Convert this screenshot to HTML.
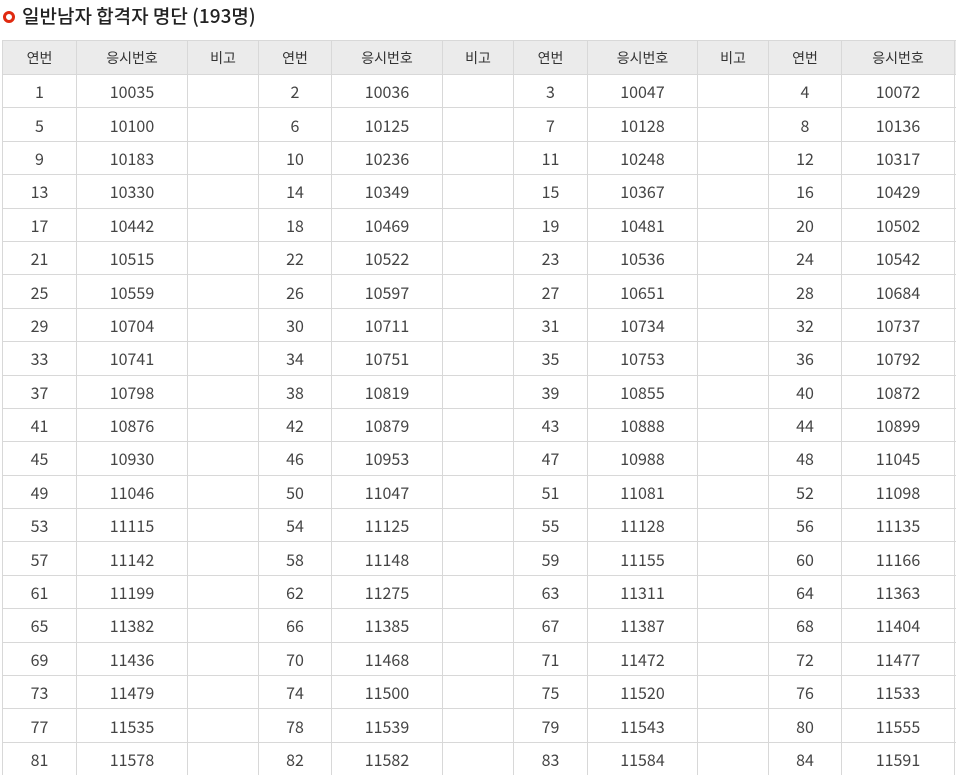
<!DOCTYPE html>
<html><head><meta charset="utf-8"><style>
html,body{margin:0;padding:0;background:#fff;width:956px;height:775px;overflow:hidden;}
body{font-family:"Noto Sans CJK KR","Liberation Sans",sans-serif;color:#333;position:relative;}
.title{position:absolute;left:3px;top:3px;font-size:19px;color:#222;line-height:26px;white-space:nowrap;font-weight:500;}
.dot{display:inline-block;width:6px;height:6px;border:3px solid #e02a10;border-radius:50%;vertical-align:middle;margin-right:7px;position:relative;top:-1px;}
.wrap{position:absolute;left:0;top:40px;width:956px;height:735px;overflow:hidden;}
table{position:absolute;left:2px;top:0;border-collapse:collapse;table-layout:fixed;width:1025px;font-size:16px;}
td,th{border:1px solid #d8d8d8;text-align:center;padding:0;line-height:20px;}
td{color:#444;}
th{background:#ebebeb;font-weight:normal;font-size:14px;color:#333;padding:0;}
tr{height:33.4px;}
thead tr{height:34px;}
</style></head><body>
<div class="title"><span class="dot"></span>일반남자 합격자 명단 (193명)</div>
<div class="wrap">
<table>
<colgroup><col style="width:74px"><col style="width:111px"><col style="width:71px"><col style="width:73px"><col style="width:111px"><col style="width:71px"><col style="width:74px"><col style="width:110px"><col style="width:71px"><col style="width:73px"><col style="width:113px"><col style="width:73px"></colgroup>
<thead><tr><th>연번</th><th>응시번호</th><th>비고</th><th>연번</th><th>응시번호</th><th>비고</th><th>연번</th><th>응시번호</th><th>비고</th><th>연번</th><th>응시번호</th><th>비고</th></tr></thead>
<tbody>
<tr><td>1</td><td>10035</td><td></td><td>2</td><td>10036</td><td></td><td>3</td><td>10047</td><td></td><td>4</td><td>10072</td><td></td></tr>
<tr><td>5</td><td>10100</td><td></td><td>6</td><td>10125</td><td></td><td>7</td><td>10128</td><td></td><td>8</td><td>10136</td><td></td></tr>
<tr><td>9</td><td>10183</td><td></td><td>10</td><td>10236</td><td></td><td>11</td><td>10248</td><td></td><td>12</td><td>10317</td><td></td></tr>
<tr><td>13</td><td>10330</td><td></td><td>14</td><td>10349</td><td></td><td>15</td><td>10367</td><td></td><td>16</td><td>10429</td><td></td></tr>
<tr><td>17</td><td>10442</td><td></td><td>18</td><td>10469</td><td></td><td>19</td><td>10481</td><td></td><td>20</td><td>10502</td><td></td></tr>
<tr><td>21</td><td>10515</td><td></td><td>22</td><td>10522</td><td></td><td>23</td><td>10536</td><td></td><td>24</td><td>10542</td><td></td></tr>
<tr><td>25</td><td>10559</td><td></td><td>26</td><td>10597</td><td></td><td>27</td><td>10651</td><td></td><td>28</td><td>10684</td><td></td></tr>
<tr><td>29</td><td>10704</td><td></td><td>30</td><td>10711</td><td></td><td>31</td><td>10734</td><td></td><td>32</td><td>10737</td><td></td></tr>
<tr><td>33</td><td>10741</td><td></td><td>34</td><td>10751</td><td></td><td>35</td><td>10753</td><td></td><td>36</td><td>10792</td><td></td></tr>
<tr><td>37</td><td>10798</td><td></td><td>38</td><td>10819</td><td></td><td>39</td><td>10855</td><td></td><td>40</td><td>10872</td><td></td></tr>
<tr><td>41</td><td>10876</td><td></td><td>42</td><td>10879</td><td></td><td>43</td><td>10888</td><td></td><td>44</td><td>10899</td><td></td></tr>
<tr><td>45</td><td>10930</td><td></td><td>46</td><td>10953</td><td></td><td>47</td><td>10988</td><td></td><td>48</td><td>11045</td><td></td></tr>
<tr><td>49</td><td>11046</td><td></td><td>50</td><td>11047</td><td></td><td>51</td><td>11081</td><td></td><td>52</td><td>11098</td><td></td></tr>
<tr><td>53</td><td>11115</td><td></td><td>54</td><td>11125</td><td></td><td>55</td><td>11128</td><td></td><td>56</td><td>11135</td><td></td></tr>
<tr><td>57</td><td>11142</td><td></td><td>58</td><td>11148</td><td></td><td>59</td><td>11155</td><td></td><td>60</td><td>11166</td><td></td></tr>
<tr><td>61</td><td>11199</td><td></td><td>62</td><td>11275</td><td></td><td>63</td><td>11311</td><td></td><td>64</td><td>11363</td><td></td></tr>
<tr><td>65</td><td>11382</td><td></td><td>66</td><td>11385</td><td></td><td>67</td><td>11387</td><td></td><td>68</td><td>11404</td><td></td></tr>
<tr><td>69</td><td>11436</td><td></td><td>70</td><td>11468</td><td></td><td>71</td><td>11472</td><td></td><td>72</td><td>11477</td><td></td></tr>
<tr><td>73</td><td>11479</td><td></td><td>74</td><td>11500</td><td></td><td>75</td><td>11520</td><td></td><td>76</td><td>11533</td><td></td></tr>
<tr><td>77</td><td>11535</td><td></td><td>78</td><td>11539</td><td></td><td>79</td><td>11543</td><td></td><td>80</td><td>11555</td><td></td></tr>
<tr><td>81</td><td>11578</td><td></td><td>82</td><td>11582</td><td></td><td>83</td><td>11584</td><td></td><td>84</td><td>11591</td><td></td></tr>
<tr><td>85</td><td></td><td></td><td>86</td><td></td><td></td><td>87</td><td></td><td></td><td>88</td><td></td><td></td></tr>
</tbody></table>
</div>
</body></html>
